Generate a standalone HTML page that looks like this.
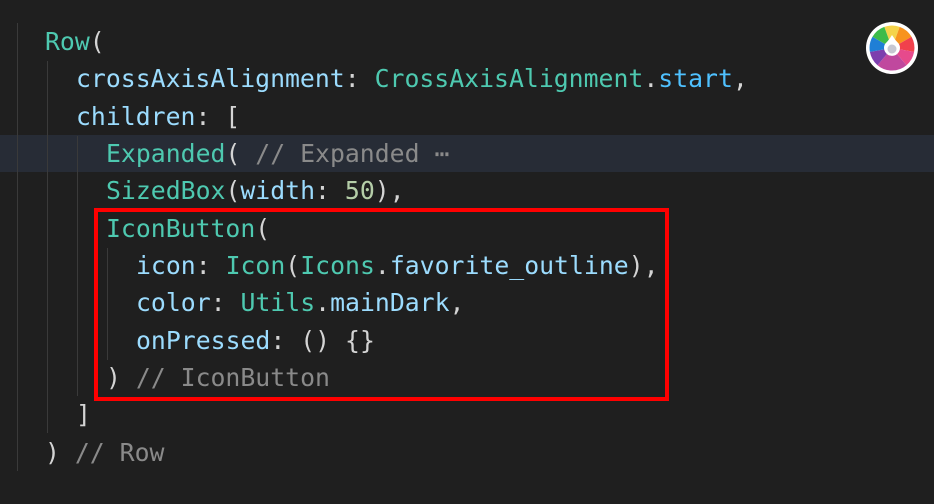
<!DOCTYPE html>
<html><head><style>
body{margin:0;width:934px;height:504px;background:#1f1f1f;position:relative;overflow:hidden;font-family:"DejaVu Sans Mono","Liberation Mono",monospace;font-size:24.8px;}
.l{position:absolute;left:0;height:37.5px;line-height:37.5px;white-space:pre;color:#d4d4d4;}
.g{color:#4ec9b0}.b{color:#9cdcfe}.c{color:#8a8a8a}.n{color:#b5cea8}.s{color:#4fc1ff}
.v{position:absolute;width:1px;background:#3a3a3a}
</style></head><body>
<div style="position:absolute;left:0;top:135px;width:934px;height:37px;background:#272c36"></div>
<div class="v" style="left:17px;top:23px;height:448px"></div>
<div class="v" style="left:47px;top:61px;height:372px"></div>
<div class="v" style="left:77px;top:136px;height:260px"></div>
<div class="v" style="left:107px;top:248px;height:112px"></div>
<div class="l" style="top:23px;left:45px"><span class="g">Row</span>(</div>
<div class="l" style="top:60px;left:76px"><span class="b">crossAxisAlignment</span>: <span class="g">CrossAxisAlignment</span>.<span class="s">start</span>,</div>
<div class="l" style="top:98px;left:76px"><span class="b">children</span>: [</div>
<div class="l" style="top:135px;left:106px"><span class="g">Expanded</span>( <span class="c">// Expanded ⋯</span></div>
<div class="l" style="top:172px;left:106px"><span class="g">SizedBox</span>(<span class="b">width</span>: <span class="n">50</span>),</div>
<div class="l" style="top:210px;left:106px"><span class="g">IconButton</span>(</div>
<div class="l" style="top:247px;left:136px"><span class="b">icon</span>: <span class="g">Icon</span>(<span class="g">Icons</span>.<span class="b">favorite_outline</span>),</div>
<div class="l" style="top:284px;left:136px"><span class="b">color</span>: <span class="g">Utils</span>.<span class="b">mainDark</span>,</div>
<div class="l" style="top:322px;left:136px"><span class="b">onPressed</span>: () {}</div>
<div class="l" style="top:359px;left:106px">) <span class="c">// IconButton</span></div>
<div class="l" style="top:396px;left:76px">]</div>
<div class="l" style="top:434px;left:45px">) <span class="c">// Row</span></div>
<div style="position:absolute;left:94px;top:208px;width:567px;height:185px;border:4px solid #f00"></div>
<svg style="position:absolute;left:865px;top:21px" width="54" height="54" viewBox="-27 -27 54 54">
<circle r="26" fill="#fff"/>
<g>
<path d="M0 0 L-7.7 -21.1 A22.5 22.5 0 0 1 7.7 -21.1Z" fill="#f4d34a"/>
<path d="M0 0 L7.7 -21.1 A22.5 22.5 0 0 1 19.5 -11.2Z" fill="#f7931e"/>
<path d="M0 0 L19.5 -11.2 A22.5 22.5 0 0 1 22.1 3.9Z" fill="#f1414c"/>
<path d="M0 0 L22.1 3.9 A22.5 22.5 0 0 1 14.5 17.2Z" fill="#e64a8c"/>
<path d="M0 0 L14.5 17.2 A22.5 22.5 0 0 1 0 22.5 A22.5 22.5 0 0 1 -14.5 17.2Z" fill="#c0489e"/>
<path d="M0 0 L-14.5 17.2 A22.5 22.5 0 0 1 -22.1 3.9Z" fill="#7d3fae"/>
<path d="M0 0 L-22.1 3.9 A22.5 22.5 0 0 1 -19.5 -11.2Z" fill="#1f7fd6"/>
<path d="M0 0 L-19.5 -11.2 A22.5 22.5 0 0 1 -7.7 -21.1Z" fill="#3dbb4a"/>
</g>
<path d="M0 -13 Q3 -8 7 -4 A8 8 0 1 1 -7 -4 Q-3 -8 0 -13Z" fill="#fff"/>
<circle cy="1" r="4.5" fill="#c7c7d2"/>
</svg>
</body></html>
